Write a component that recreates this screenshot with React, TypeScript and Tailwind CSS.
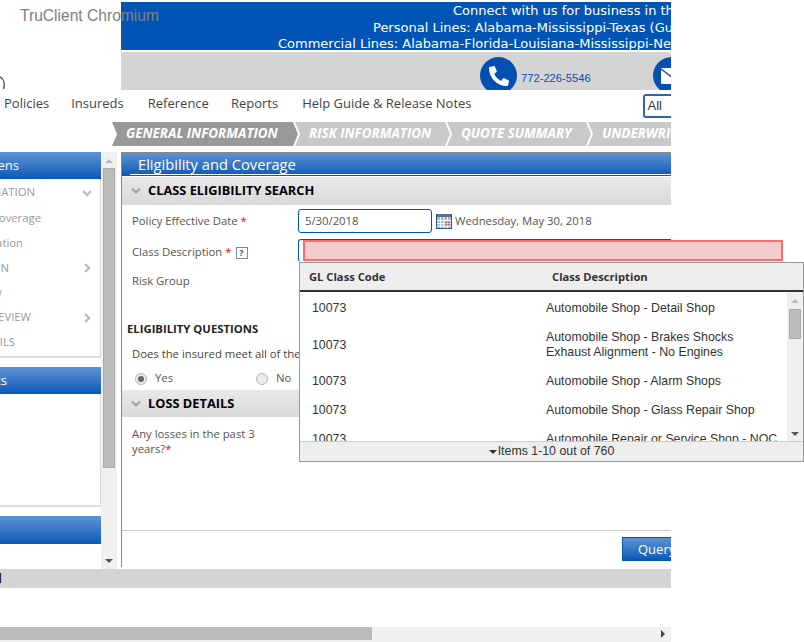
import { FaPhoneAlt } from "react-icons/fa"

const rows = [
    { code: "10073", desc: "Automobile Shop - Detail Shop" },
    { code: "10073", desc: "Automobile Shop - Brakes Shocks Exhaust Alignment - No Engines" },
    { code: "10073", desc: "Automobile Shop - Alarm Shops" },
    { code: "10073", desc: "Automobile Shop - Glass Repair Shop" },
    { code: "10073", desc: "Automobile Repair or Service Shop - NOC" },
]

const sideItems = [
    { label: "GENERAL INFORMATION", w: "w-[35px]", h: "h-[27px]", arrow: "down" },
    { label: "Eligibility and Coverage", w: "w-[41px]", h: "h-[25px]", arrow: "" },
    { label: "Risk Information", w: "w-[23px]", h: "h-[25px]", arrow: "" },
    { label: "RISK INFORMATION", w: "w-[9px]", h: "h-[24px]", arrow: "right" },
    { label: "Quote Summary", w: "w-[2px]", h: "h-[25px]", arrow: "" },
    { label: "UNDERWRITING REVIEW", w: "w-[31px]", h: "h-[25px]", arrow: "right" },
    { label: "POLICY DETAILS", w: "w-[15px]", h: "h-[25px]", arrow: "" },
]

function Chevron({ dir, className }: { dir: string; className?: string }) {
    return (
        <svg width="10" height="10" viewBox="0 0 10 10" className={className}>
            <path
                d={dir === "down" ? "M1 3 L5 7 L9 3" : "M3 1 L7 5 L3 9"}
                fill="none"
                stroke="#bdbdbd"
                strokeWidth="2.4"
            />
        </svg>
    )
}

function SectionBar({ title, className }: { title: string; className?: string }) {
    return (
        <div className={`flex shrink-0 items-center bg-gradient-to-b from-[#e9e9e9] to-[#d9d9d9] ${className}`}>
            <svg width="10" height="8" viewBox="0 0 10 8" className="ml-[9px] mr-[7px]">
                <path d="M1 1.5 L5 5.5 L9 1.5" fill="none" stroke="#a3a3a3" strokeWidth="2.2" />
            </svg>
            <span className="text-[12.8px] font-bold text-black">{title}</span>
        </div>
    )
}

function SideHeader({ label, width, className }: { label: string; width: string; className?: string }) {
    return (
        <div className={`flex justify-end overflow-hidden bg-gradient-to-b from-[#5c94d3] to-[#0358b8] text-[13px] leading-[26px] text-white ${className}`}>
            <div className={`flex ${width} justify-end overflow-hidden whitespace-nowrap`}>{label}</div>
            <div className="flex-1" />
        </div>
    )
}

function Step({ label, className }: { label: string; className: string }) {
    return (
        <div
            className={`flex h-[24px] shrink-0 items-center pb-[2px] pl-[14px] text-[13.4px] font-bold italic whitespace-nowrap text-white [clip-path:polygon(0_0,calc(100%-5px)_0,100%_50%,calc(100%-5px)_100%,0_100%,5px_50%)] ${className}`}
        >
            {label}
        </div>
    )
}

function Radio({ checked }: { checked?: boolean }) {
    return (
        <span className="flex h-[12px] w-[12px] shrink-0 items-center justify-center rounded-full border border-[#b5b5b5] bg-[#ececec]">
            {checked && <span className="h-[6px] w-[6px] rounded-full bg-[#666]" />}
        </span>
    )
}

export default function App() {
    return (
        <div className="relative h-[642px] w-[804px] overflow-hidden bg-white font-['Open_Sans',sans-serif] text-[11.3px] text-[#555]">
            <div className="flex h-[642px] w-[671px] flex-col overflow-hidden">
                <div className="ml-[121px] mt-[2px] flex h-[48px] shrink-0 flex-col overflow-hidden bg-[#0254b5] pt-[1px] font-['DejaVu_Sans',sans-serif] text-[13px] leading-[16.5px] whitespace-nowrap text-white">
                    <div className="ml-[332px]">Connect with us for business in the following</div>
                    <div className="ml-[252px]">Personal Lines: Alabama-Mississippi-Texas (Gulf Coast)</div>
                    <div className="ml-[157px]">Commercial Lines: Alabama-Florida-Louisiana-Mississippi-New Orleans</div>
                </div>
                <div className="relative flex h-[40px] shrink-0">
                    <div className="relative w-[121px]">
                        <svg width="8" height="14" viewBox="0 0 8 14" className="absolute left-0 top-[26px]">
                            <path d="M0 1 C4 3 5 8 3.5 13" fill="none" stroke="#444" strokeWidth="1.4" />
                        </svg>
                    </div>
                    <div className="mt-[2px] flex flex-1 overflow-hidden bg-[#d4d4d4] pl-[359px] pt-[5px]">
                        <div className="flex h-[37px] w-[37px] shrink-0 items-center justify-center rounded-full bg-[#0350b0] text-[20px] text-white">
                            <FaPhoneAlt />
                        </div>
                        <div className="ml-[4px] mt-[11px] w-[92px] shrink-0 font-['Liberation_Sans',sans-serif] text-[11.2px] leading-[20px] text-[#0350b0]">
                            772-226-5546
                        </div>
                        <div className="ml-[40px] flex h-[37px] w-[37px] shrink-0 items-center justify-center rounded-full bg-[#0350b0]">
                            <svg width="22" height="16" viewBox="0 0 22 16">
                                <rect width="22" height="16" rx="1" fill="#fff" />
                                <path d="M0 1 L11 9 L22 1" fill="none" stroke="#0350b0" strokeWidth="1.4" />
                            </svg>
                        </div>
                    </div>
                </div>
                <div className="flex h-[32px] shrink-0 items-center whitespace-nowrap pl-[4px] text-[13px] text-[#444]">
                    <span className="mb-[4px]">Policies</span>
                    <span className="mb-[4px] ml-[22px]">Insureds</span>
                    <span className="mb-[4px] ml-[24px]">Reference</span>
                    <span className="mb-[4px] ml-[22px]">Reports</span>
                    <span className="mb-[4px] ml-[24px]">Help Guide &amp; Release Notes</span>
                    <div className="ml-[171px] flex h-[24px] w-[40px] shrink-0 items-center rounded-l-[3px] border-2 border-[#2d66ae] pl-[3px] font-['Liberation_Sans',sans-serif] text-[13px] text-[#333]">
                        All
                    </div>
                </div>
                <div className="flex h-[24px] shrink-0 pl-[112px]">
                    <Step label="GENERAL INFORMATION" className="w-[186px] bg-[#999]" />
                    <Step label="RISK INFORMATION" className="-ml-[3px] w-[155px] bg-[#c9c9c9]" />
                    <Step label="QUOTE SUMMARY" className="-ml-[3px] w-[144px] bg-[#c9c9c9]" />
                    <Step label="UNDERWRITING" className="-ml-[3px] w-[160px] bg-[#c9c9c9]" />
                </div>
                <div className="mt-[6px] flex h-[417px] shrink-0">
                    <div className="flex w-[101px] shrink-0 flex-col">
                        <SideHeader label="Screens" width="w-[19px]" className="h-[27px]" />
                        <div className="flex h-[179px] flex-col border-r border-b-2 border-[#dcdcdc] text-[#999]">
                            {sideItems.map((item) => (
                                <div key={item.label} className={`flex ${item.h} items-center`}>
                                    <div className={`flex ${item.w} justify-end overflow-hidden whitespace-nowrap`}>{item.label}</div>
                                    <div className="flex-1" />
                                    {item.arrow && <Chevron dir={item.arrow} className="mr-[8px]" />}
                                </div>
                            ))}
                        </div>
                        <SideHeader label="Quick Links" width="w-[7px]" className="mt-[9px] h-[27px]" />
                        <div className="h-[113px] border-r border-b-2 border-[#dcdcdc]" />
                        <SideHeader label="Documents" width="w-[0px]" className="mt-[9px] h-[28px]" />
                    </div>
                    <div className="flex w-[16px] shrink-0 flex-col items-center bg-[#f0f0f0]">
                        <div className="mt-[7px] h-0 w-0 border-x-[4px] border-b-[4px] border-x-transparent border-b-[#bbb]" />
                        <div className="mt-[5px] h-[300px] w-[12px] border border-[#aaa] bg-[#bcbcbc]" />
                        <div className="flex-1" />
                        <div className="mb-[6px] h-0 w-0 border-x-[4px] border-t-[4px] border-x-transparent border-t-[#555]" />
                    </div>
                    <div className="ml-[4px] flex h-[415px] w-[550px] shrink-0 flex-col border-l border-t border-[#888]">
                        <div className="shrink-0 bg-gradient-to-b from-[#5c94d3] to-[#0358b8] pb-[1px] pl-[8px]">
                            <div className="h-[22px] border-b border-white pl-[8px] text-[14.7px] leading-[22px] text-white">
                                Eligibility and Coverage
                            </div>
                        </div>
                        <SectionBar title="CLASS ELIGIBILITY SEARCH" className="mt-[1px] h-[28px] pb-[1px]" />
                        <div className="flex h-[28px] shrink-0 items-center pl-[10px] pt-[4px]">
                            <div className="w-[166px]">
                                Policy Effective Date <span className="text-red-600">*</span>
                            </div>
                            <div className="flex h-[24px] w-[134px] items-center rounded-[3px] border border-[#0254b5] pl-[6px]">5/30/2018</div>
                            <svg width="16" height="16" viewBox="0 0 16 16" className="ml-[4px]">
                                <rect x="0.5" y="1.5" width="15" height="14" fill="#9db8de" stroke="#2f5b99" />
                                <rect x="1" y="1" width="14" height="3" fill="#5f6f88" />
                                <path d="M1 7.5H15M1 10.5H15M1 13H15M4.5 4V15M8 4V15M11.5 4V15" stroke="#fff" strokeWidth="1" />
                                <rect x="10" y="9" width="3" height="3" fill="none" stroke="#d9502e" />
                            </svg>
                            <span className="ml-[3px]">Wednesday, May 30, 2018</span>
                        </div>
                        <div className="mt-[6px] flex h-[23px] shrink-0 pl-[10px]">
                            <div className="flex w-[166px] items-center pt-[4px]">
                                Class Description <span className="ml-[3px] text-red-600">*</span>
                                <span className="ml-[4px] flex h-[12px] w-[12px] items-center justify-center border border-[#888] text-[9px] leading-none font-bold">?</span>
                            </div>
                            <div className="h-[23px] flex-1 rounded-l-[3px] border-l border-t border-[#0254b5]" />
                        </div>
                        <div className="mt-[10px] pl-[10px] leading-[17px]">Risk Group</div>
                        <div className="mt-[31px] pl-[5px] font-bold leading-[17px] text-[#222]">ELIGIBILITY QUESTIONS</div>
                        <div className="mt-[8px] whitespace-nowrap pl-[10px] leading-[17px] text-[#444]">Does the insured meet all of the following</div>
                        <div className="mt-[8px] flex h-[17px] shrink-0 items-center pl-[13px]">
                            <Radio checked />
                            <span className="ml-[8px] w-[101px]">Yes</span>
                            <Radio />
                            <span className="ml-[8px]">No</span>
                        </div>
                        <SectionBar title="LOSS DETAILS" className="mt-[3px] h-[27px]" />
                        <div className="mt-[9px] w-[155px] pl-[10px] leading-[15px]">
                            Any losses in the past 3 years?<span className="text-red-600">*</span>
                        </div>
                        <div className="mt-[74px] border-t border-[#ccc] pt-[6px]">
                            <div className="ml-[500px] h-[24px] w-[60px] border border-[#0254b5] bg-gradient-to-b from-[#5c94d3] to-[#0358b8] pl-[15px] text-[13px] leading-[22px] text-white">
                                Query
                            </div>
                        </div>
                    </div>
                </div>
                <div className="flex h-[19px] shrink-0 items-center bg-[#d4d4d4] text-[13px] text-black">
                    <div className="flex w-[2px] justify-end overflow-hidden">l</div>
                </div>
                <div className="h-[39px] shrink-0" />
                <div className="flex h-[15px] shrink-0 bg-[#f0f0f0]">
                    <div className="h-[13px] w-[372px] bg-[#bbb]" />
                    <div className="flex-1" />
                    <div className="mr-[6px] mt-[3px] h-0 w-0 border-y-[4px] border-l-[4px] border-y-transparent border-l-[#444]" />
                </div>
            </div>

            <div className="absolute left-[20px] top-[4px] font-['Liberation_Sans',sans-serif] text-[15.6px] text-[#808080]">TruClient Chromium</div>

            <div className="absolute left-[303px] top-[240px] h-[21px] w-[480px] border-2 border-[#ff6b6b] bg-[#f4cccc]" />

            <div className="absolute left-[299px] top-[262px] flex h-[200px] w-[505px] flex-col border border-[#999] bg-white font-['Liberation_Sans',sans-serif] text-[12.35px] text-[#333]">
                <div className="flex h-[29px] shrink-0 items-center border-b-2 border-[#333] bg-[#eee] pt-[1px] font-['Open_Sans',sans-serif] text-[11.2px] font-bold">
                    <div className="w-[252px] pl-[9px]">GL Class Code</div>
                    <div>Class Description</div>
                </div>
                <div className="flex min-h-0 flex-1">
                    <div className="flex-1 overflow-hidden pt-[2px]">
                        {rows.map((row) => (
                            <div key={row.desc} className="flex items-center py-[7px] leading-[15px]">
                                <div className="w-[246px] shrink-0 pl-[12px]">{row.code}</div>
                                <div className="w-[235px]">{row.desc}</div>
                            </div>
                        ))}
                    </div>
                    <div className="flex w-[16px] shrink-0 flex-col items-center bg-[#f0f0f0]">
                        <div className="mt-[7px] h-0 w-0 border-x-[4px] border-b-[4px] border-x-transparent border-b-[#bbb]" />
                        <div className="mt-[6px] h-[30px] w-[12px] border border-[#aaa] bg-[#bcbcbc]" />
                        <div className="flex-1" />
                        <div className="mb-[5px] h-0 w-0 border-x-[4px] border-t-[4px] border-x-transparent border-t-[#555]" />
                    </div>
                </div>
                <div className="flex h-[20px] shrink-0 items-center justify-center border-t border-[#ccc] bg-[#eee]">
                    <span className="mr-[1px] h-0 w-0 border-x-[4px] border-t-[4px] border-x-transparent border-t-[#333]" />
                    Items 1-10 out of 760
                </div>
            </div>
        </div>
    )
}
